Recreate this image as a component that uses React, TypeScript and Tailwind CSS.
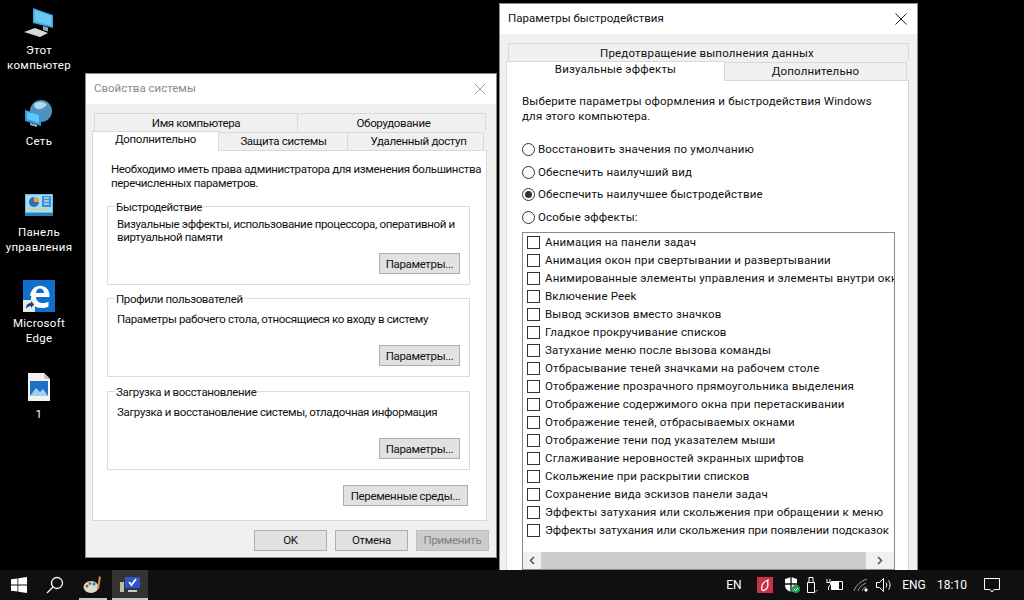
import type { ReactNode } from 'react'

const effects = [
    'Анимация на панели задач',
    'Анимация окон при свертывании и развертывании',
    'Анимированные элементы управления и элементы внутри окна',
    'Включение Peek',
    'Вывод эскизов вместо значков',
    'Гладкое прокручивание списков',
    'Затухание меню после вызова команды',
    'Отбрасывание теней значками на рабочем столе',
    'Отображение прозрачного прямоугольника выделения',
    'Отображение содержимого окна при перетаскивании',
    'Отображение теней, отбрасываемых окнами',
    'Отображение тени под указателем мыши',
    'Сглаживание неровностей экранных шрифтов',
    'Скольжение при раскрытии списков',
    'Сохранение вида эскизов панели задач',
    'Эффекты затухания или скольжения при обращении к меню',
    'Эффекты затухания или скольжения при появлении подсказок',
]

const radios = [
    { label: 'Восстановить значения по умолчанию', on: false },
    { label: 'Обеспечить наилучший вид', on: false },
    { label: 'Обеспечить наилучшее быстродействие', on: true },
    { label: 'Особые эффекты:', on: false },
]

function CloseIcon({ color }: { color: string }) {
    return (
        <svg width="12" height="12" viewBox="0 0 12 12" fill="none" stroke={color} strokeWidth="1">
            <path d="M.5.5l11 11M11.500.5l-11 11" />
        </svg>
    )
}

function Btn({ children, w, disabled }: { children: ReactNode; w: string; disabled?: boolean }) {
    return (
        <div
            className={`${w} h-[21px] flex items-center justify-center border whitespace-nowrap ${
                disabled ? 'bg-[#cccccc] border-[#bfbfbf] text-[#808080]' : 'bg-[#e1e1e1] border-[#adadad] text-[#111111]'
            }`}
        >
            {children}
        </div>
    )
}

function Group({ title, children }: { title: string; children: ReactNode }) {
    return (
        <div className="relative h-[79px] ml-[14px] w-[363px] border border-[#dcdcdc] pl-[9px] pt-[13px] leading-[14px] whitespace-nowrap">
            <span className="absolute left-[7px] -top-[7px] bg-white px-[1px]">{title}</span>
            {children}
            <div className="absolute right-[9px] bottom-[10px]">
                <Btn w="w-[81px]">Параметры...</Btn>
            </div>
        </div>
    )
}

function SystemProps() {
    return (
        <div className="absolute left-[85px] top-[73px] w-[412px] h-[485px] flex flex-col bg-[#f0f0f0] border border-[#8c8c8c]">
            <div className="h-[30px] shrink-0 bg-white flex items-center justify-between pl-[8px] pr-[10px] text-[#8a8a8a]">
                <span>Свойства системы</span>
                <CloseIcon color="#a0a0a0" />
            </div>
            <div className="pt-[9px] flex flex-col text-[#111111] tracking-[-0.35px]">
                <div className="flex h-[18px] ml-[8px] w-[392px]">
                    <div className="w-[204px] border border-b-0 border-[#d9d9d9] flex items-center justify-center pt-[2px]">Имя компьютера</div>
                    <div className="flex-1 border border-b-0 border-l-0 border-[#d9d9d9] flex items-center justify-center pt-[2px] pl-[4px]">Оборудование</div>
                </div>
                <div className="flex h-[20px] ml-[6px] relative z-10">
                    <div className="w-[127px] h-[20px] bg-white border border-b-0 border-[#d9d9d9] flex items-center justify-center pb-[3px]">Дополнительно</div>
                    <div className="w-[129px] h-[19px] mt-[1px] border-r border-t border-[#d9d9d9] flex items-center justify-center pl-[1px]">Защита системы</div>
                    <div className="w-[136px] h-[19px] mt-[1px] border-r border-t border-[#d9d9d9] flex items-center justify-center pl-[6px]">Удаленный доступ</div>
                </div>
                <div className="ml-[6px] w-[395px] h-[371px] -mt-[1px] bg-white border border-[#d9d9d9] pt-[11px] flex flex-col leading-[14px]">
                    <p className="ml-[18px] whitespace-nowrap">
                        Необходимо иметь права администратора для изменения большинства
                        <br />
                        перечисленных параметров.
                    </p>
                    <div className="mt-[16px] flex flex-col gap-[13px]">
                        <Group title="Быстродействие">
                            <div className="-mt-[2px] leading-[13px]">
                                Визуальные эффекты, использование процессора, оперативной и
                                <br />
                                виртуальной памяти
                            </div>
                        </Group>
                        <Group title="Профили пользователей">Параметры рабочего стола, относящиеся ко входу в систему</Group>
                        <div className="mt-[1px]">
                            <Group title="Загрузка и восстановление">Загрузка и восстановление системы, отладочная информация</Group>
                        </div>
                    </div>
                    <div className="flex justify-end mt-[15px] pr-[18px]">
                        <Btn w="w-[125px]">Переменные среды...</Btn>
                    </div>
                </div>
                <div className="flex justify-end gap-[8px] pr-[7px] mt-[9px]">
                    <Btn w="w-[73px]">OK</Btn>
                    <Btn w="w-[73px]">Отмена</Btn>
                    <Btn w="w-[73px]" disabled>
                        Применить
                    </Btn>
                </div>
            </div>
        </div>
    )
}

function PerfOptions() {
    return (
        <div className="absolute left-[499px] top-[3px] w-[419px] h-[567px] flex flex-col bg-[#f0f0f0] border-x border-t border-[#8c8c8c] overflow-hidden">
            <div className="h-[30px] shrink-0 bg-white flex items-center justify-between pl-[8px] pr-[10px] text-[#111111]">
                <span>Параметры быстродействия</span>
                <CloseIcon color="#222222" />
            </div>
            <div className="pt-[9px] flex flex-col text-[#111111] tracking-[0.17px]">
                <div className="h-[18px] ml-[8px] w-[401px] border border-b-0 border-[#d9d9d9] flex items-center justify-center pr-[3px] pt-[2px]">
                    Предотвращение выполнения данных
                </div>
                <div className="flex ml-[6px] h-[20px] relative z-10">
                    <div className="w-[219px] h-[20px] bg-white border border-b-0 border-[#d9d9d9] flex items-center justify-center pb-[3px]">Визуальные эффекты</div>
                    <div className="w-[182px] h-[19px] mt-[1px] border-r border-t border-[#d9d9d9] flex items-center justify-center">Дополнительно</div>
                </div>
                <div className="ml-[6px] w-[403px] h-[491px] -mt-[1px] bg-white border border-[#d9d9d9] pt-[13px] pl-[15px] leading-[15px]">
                    <p className="whitespace-nowrap">
                        Выберите параметры оформления и быстродействия Windows
                        <br />
                        для этого компьютера.
                    </p>
                    <div className="mt-[18px] flex flex-col gap-[7.5px]">
                        {radios.map((r) => (
                            <div key={r.label} className="h-[15px] flex items-center gap-[3px]">
                                <span className="w-[13px] h-[13px] rounded-full border border-[#333333] flex items-center justify-center shrink-0">
                                    {r.on && <span className="w-[7px] h-[7px] rounded-full bg-[#333333]" />}
                                </span>
                                <span>{r.label}</span>
                            </div>
                        ))}
                    </div>
                    <div className="mt-[7px] w-[373px] h-[338px] border border-[#8a8a8a] flex flex-col">
                        <div className="flex-1 min-h-0 pl-[4px] pt-[1px] overflow-hidden">
                            {effects.map((e) => (
                                <div key={e} className="h-[18px] flex items-center gap-[5px] whitespace-nowrap last:tracking-[0px]">
                                    <span className="w-[13px] h-[13px] border border-[#333333] shrink-0" />
                                    <span>{e}</span>
                                </div>
                            ))}
                        </div>
                        <div className="h-[17px] bg-[#f0f0f0] flex items-center shrink-0">
                            <svg className="w-[18px] shrink-0" height="17" viewBox="0 0 18 17" fill="none" stroke="#555555" strokeWidth="1.500">
                                <path d="M11 5l-3.500 3.500L11 12" />
                            </svg>
                            <div className="w-[325px] h-full bg-[#cdcdcd]" />
                            <div className="flex-1 flex justify-center">
                                <svg width="10" height="17" viewBox="0 0 10 17" fill="none" stroke="#555555" strokeWidth="1.500">
                                    <path d="M3 5l3.500 3.500L3 12" />
                                </svg>
                            </div>
                        </div>
                    </div>
                </div>
            </div>
        </div>
    )
}

function PcIcon() {
    return (
        <svg width="32" height="32" viewBox="0 0 32 32">
            <path d="M10 1l20 7v13l-20-5z" fill="#3aa3de" />
            <path d="M11.500 3l17 6v10l-17-4.500z" fill="#6cc8f2" />
            <path d="M20 19l5 1.500v4l-5-1.500z" fill="#8fa9b8" />
            <path d="M1 25l11-4 13 5-8 4z" fill="#d9d9d9" />
        </svg>
    )
}

function NetIcon() {
    return (
        <svg width="30" height="30" viewBox="0 0 30 30">
            <circle cx="17" cy="12" r="11" fill="#4f93bf" />
            <path d="M10 5c4-3 10-3 13 1-3 2-5 5-9 4-2 0-4-2-4-5z" fill="#b5d7e8" />
            <path d="M1 11l16 4v12L1 22z" fill="#2f9bdc" />
            <path d="M3 13l12 3v8L3 20z" fill="#63c5f2" />
            <path d="M6 24l7 2v2l-7-2z" fill="#a8b8c0" />
        </svg>
    )
}

function PanelIcon() {
    return (
        <svg width="28" height="22" viewBox="0 0 28 22">
            <rect width="28" height="19" fill="#62bde8" />
            <rect x="1" y="1" width="26" height="17" fill="#a8dcf3" />
            <circle cx="9" cy="8" r="5" fill="#2f6fb0" />
            <path d="M9 8V3a5 5 0 0 1 5 5z" fill="#f0a63c" />
            <rect x="17" y="2" width="9" height="11" fill="#3d8fcf" />
            <path d="M19 4h5M19 7h5M19 10h5" stroke="#ffffff" strokeWidth="1" />
            <path d="M3 15h18" stroke="#e8c95a" strokeWidth="1" />
            <rect y="19" width="28" height="3" fill="#2a7fb8" />
        </svg>
    )
}

function EdgeIcon() {
    return (
        <svg width="32" height="32" viewBox="0 0 32 32">
            <rect width="32" height="32" fill="#0f6fcd" />
            <path d="M7 16c1-7 6-11 12-10 5 1 8 5 7.500 11H13c.3 4 3 6 7 6 2 0 4-.5 5.500-1.500v5c-2 1-4 1.500-7 1.500-7 0-11-5-10.500-10 .5-3 2-5 5-7-2 1.500-3 3-3.500 5zM13 13h8c0-3-1.500-4.500-4-4.500S13.300 10 13 13z" fill="#ffffff" />
            <rect y="20" width="12" height="12" fill="#e8e8e8" />
            <path d="M3 29c0-4 2-6 5-6v-2l3 3.500L8 28v-2c-2 0-4 1-5 3z" fill="#1d3f72" />
        </svg>
    )
}

function ImageIcon() {
    return (
        <svg width="22" height="28" viewBox="0 0 22 28">
            <path d="M0 0h16l6 6v22H0z" fill="#f2f2f2" />
            <path d="M16 0l6 6h-6z" fill="#c4c4c4" />
            <rect x="2" y="8" width="18" height="15" fill="#1f6fc4" />
            <path d="M2 23l6-8 4 4 3-3 5 7z" fill="#9dd0f3" />
        </svg>
    )
}

function DesktopIcon({ top, icon, lines }: { top: string; icon: ReactNode; lines: string[] }) {
    return (
        <div className={`absolute left-0 w-[78px] flex flex-col items-center text-white leading-[15px] ${top}`}>
            <div className="h-[32px] flex items-center justify-center">{icon}</div>
            <div className="mt-[4px] text-center tracking-[0.3px]">
                {lines.map((l) => (
                    <div key={l}>{l}</div>
                ))}
            </div>
        </div>
    )
}

function Taskbar() {
    return (
        <div className="absolute left-0 right-0 bottom-0 h-[30px] bg-[#101010] flex items-center text-white text-[12px]">
            <div className="w-[37px] flex justify-center">
                <svg width="16" height="16" viewBox="0 0 16 16" fill="#ffffff">
                    <path d="M0 2.300l6.500-.9v6.200H0zM7.300 1.300L16 0v7.600H7.300zM0 8.400h6.500v6.200L0 13.700zM7.300 8.400H16V16l-8.700-1.200z" />
                </svg>
            </div>
            <div className="w-[36px] flex justify-center">
                <svg width="18" height="18" viewBox="0 0 18 18" fill="none" stroke="#ffffff" strokeWidth="1.300">
                    <circle cx="11" cy="7" r="5.500" />
                    <path d="M7 11l-6 6" />
                </svg>
            </div>
            <div className="w-[36px] h-full ml-[2px] flex justify-center items-center relative">
                <svg width="20" height="18" viewBox="0 0 20 18">
                    <ellipse cx="8" cy="11" rx="7.500" ry="6" fill="#d9dcd2" />
                    <circle cx="4" cy="10" r="1.500" fill="#c73a3a" />
                    <circle cx="7" cy="7.500" r="1.500" fill="#3a9c4a" />
                    <circle cx="11" cy="8" r="1.500" fill="#2f6fc4" />
                    <path d="M16 0l2 1-2 12h-2z" fill="#d98a3a" />
                </svg>
                <div className="absolute bottom-0 left-[4px] right-[4px] h-[2px] bg-[#c8c8c8]" />
            </div>
            <div className="w-[36px] h-full ml-[1px] bg-[#333333] flex justify-center items-center relative">
                <svg width="20" height="18" viewBox="0 0 20 18">
                    <rect x="0" y="6" width="4" height="10" fill="#b8c0a8" />
                    <rect x="5" y="1" width="15" height="11" fill="#2f55c8" />
                    <path d="M9 6l2.500 3L16 3" stroke="#ffffff" strokeWidth="1.800" fill="none" />
                    <path d="M8 14h9v2H8z" fill="#c8ccd0" />
                </svg>
                <div className="absolute bottom-0 left-0 right-0 h-[2px] bg-[#c8c8c8]" />
            </div>
            <div className="flex-1" />
            <span className="w-[30px] text-center">EN</span>
            <div className="w-[32px] flex justify-center">
                <svg width="16" height="16" viewBox="0 0 16 16">
                    <rect width="16" height="16" fill="#c9304a" />
                    <path d="M5 13c-1-4 1-8 6-10-1 3 1 5-1 8-1 2-3 3-5 2z" fill="none" stroke="#ffffff" strokeWidth="1.300" />
                </svg>
            </div>
            <div className="w-[22px] flex justify-center">
                <svg width="16" height="18" viewBox="0 0 16 18">
                    <path d="M7 1l6 2v6c0 4-3 6-6 7-3-1-6-3-6-7V3z" fill="#ffffff" />
                    <path d="M7 1v15M1 8h12" stroke="#101010" strokeWidth="1.300" />
                    <circle cx="12" cy="13" r="4" fill="#1f9d55" />
                    <path d="M10 13l1.500 1.500L14 12" stroke="#ffffff" fill="none" />
                </svg>
            </div>
            <div className="w-[18px] flex justify-center">
                <svg width="14" height="18" viewBox="0 0 14 18" fill="none" stroke="#ffffff">
                    <path d="M2.500 6.500h7v10h-7zM4 6.500v-5h4v5" />
                    <path d="M10 16l3-2" stroke="#888888" />
                </svg>
            </div>
            <div className="w-[28px] flex justify-center">
                <svg width="18" height="14" viewBox="0 0 18 14" fill="none" stroke="#ffffff">
                    <path d="M5.500 3.500h11v8h-11z" />
                    <rect x="6.500" y="4.500" width="6" height="6" fill="#ffffff" />
                    <path d="M1 1v3M4 1v3M.5 4.500h4v2L2.500 9v3" />
                </svg>
            </div>
            <div className="w-[24px] flex justify-center">
                <svg width="16" height="14" viewBox="0 0 16 14" fill="none" stroke="#ffffff">
                    <path d="M1 13C3 7 8 3 14 1M5 13c1-4 4-6 8-8M9 13c.5-2 2-3.500 4-4" opacity="0.600" />
                    <circle cx="13" cy="12" r="1.200" fill="#ffffff" />
                </svg>
            </div>
            <div className="w-[22px] flex justify-center">
                <svg width="18" height="16" viewBox="0 0 18 16" fill="none" stroke="#ffffff">
                    <path d="M1.500 5.500h3l4-4v13l-4-4h-3z" />
                    <path d="M11 5.500c1 1.500 1 3.500 0 5M13.500 3.500c2 2.500 2 6.500 0 9" />
                </svg>
            </div>
            <span className="w-[38px] text-center">ENG</span>
            <span className="w-[38px] text-center">18:10</span>
            <div className="w-[41px] flex justify-center">
                <svg width="16" height="16" viewBox="0 0 16 16" fill="none" stroke="#ffffff">
                    <path d="M.5 1.500h15v11H10l-2 2.500-2-2.500H.5z" />
                </svg>
            </div>
            <div className="w-[12px]" />
        </div>
    )
}

export default function App() {
    return (
        <div className="relative w-[1024px] h-[600px] overflow-hidden bg-black font-['Roboto',sans-serif] text-[11.5px]">
            <DesktopIcon top="top-[7px]" icon={<PcIcon />} lines={['Этот', 'компьютер']} />
            <DesktopIcon top="top-[98px]" icon={<NetIcon />} lines={['Сеть']} />
            <DesktopIcon top="top-[189px]" icon={<PanelIcon />} lines={['Панель', 'управления']} />
            <DesktopIcon top="top-[280px]" icon={<EdgeIcon />} lines={['Microsoft', 'Edge']} />
            <DesktopIcon top="top-[371px]" icon={<ImageIcon />} lines={['1']} />
            <SystemProps />
            <PerfOptions />
            <Taskbar />
        </div>
    )
}
